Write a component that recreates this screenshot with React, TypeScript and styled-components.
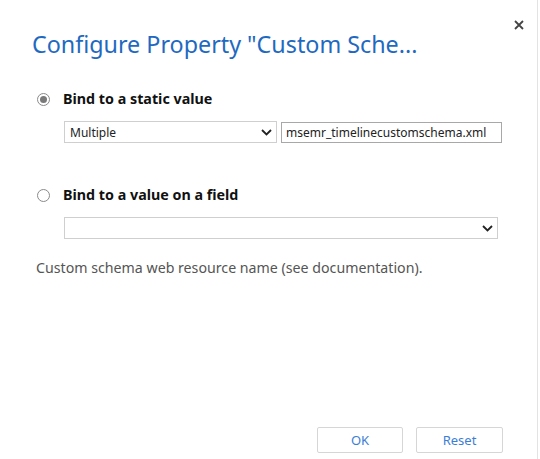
import styled, { createGlobalStyle } from "styled-components";

const GlobalStyle = createGlobalStyle`
  html, body {
    margin: 0;
    padding: 0;
    background: #ffffff;
  }
  body {
    font-family: "Noto Sans", "Open Sans", sans-serif;
  }
`;

const Dialog = styled.div`
  position: relative;
  width: 538px;
  height: 459px;
  border-right: 1px solid #e3e3e3;
  box-sizing: border-box;
  display: flex;
  flex-direction: column;
  padding: 28px 0 0 32px;
`;

const CloseButton = styled.button`
  position: absolute;
  top: 17px;
  right: 10px;
  width: 16px;
  height: 16px;
  padding: 0;
  border: none;
  background: none;
  display: flex;
  align-items: center;
  justify-content: center;
  cursor: pointer;
`;

const Title = styled.h1`
  margin: 0;
  font-size: 23.3px;
  font-weight: 400;
  color: #1f69c1;
  line-height: 32px;
  white-space: nowrap;
`;

const Section = styled.div<{ $top: number }>`
  display: flex;
  flex-direction: column;
  margin-top: ${(p) => p.$top}px;
`;

const OptionRow = styled.label`
  display: flex;
  align-items: center;
  gap: 13px;
  padding-left: 5px;
  font-size: 14.3px;
  font-weight: 700;
  color: #111;
  line-height: 20px;
`;

const Radio = styled.span<{ $checked?: boolean }>`
  width: 11px;
  height: 11px;
  border-radius: 50%;
  border: 1px solid #8a8a8a;
  box-sizing: content-box;
  display: flex;
  align-items: center;
  justify-content: center;
  &::after {
    content: "";
    width: 7px;
    height: 7px;
    border-radius: 50%;
    background: ${(p) => (p.$checked ? "#7a7a7a" : "transparent")};
  }
`;

const FieldRow = styled.div`
  display: flex;
  gap: 4px;
  margin: 12px 0 0 32px;
`;

const SelectBox = styled.div<{ $width: number }>`
  width: ${(p) => p.$width}px;
  height: 22px;
  box-sizing: border-box;
  border: 1px solid #cfcfcf;
  display: flex;
  align-items: center;
  justify-content: space-between;
  padding: 0 4px 0 5px;
  font-size: 12px;
  color: #222;
`;

const TextBox = styled.div`
  width: 221px;
  height: 21px;
  box-sizing: border-box;
  border: 1px solid #a8a8a8;
  display: flex;
  align-items: center;
  padding: 0 4px;
  font-size: 12px;
  color: #222;
  margin-top: 1px;
`;

const Description = styled.p`
  margin: 19px 0 0 4px;
  font-size: 14.2px;
  color: #555555;
  line-height: 20px;
`;

const Footer = styled.div`
  margin-top: auto;
  display: flex;
  justify-content: flex-end;
  gap: 13px;
  padding: 0 34px 6px 0;
`;

const Button = styled.button<{ $width: number }>`
  width: ${(p) => p.$width}px;
  height: 26px;
  background: #ffffff;
  border: 1px solid #d6d6d6;
  border-radius: 2px;
  color: #3b7ed6;
  font-family: inherit;
  font-size: 13px;
  padding: 0;
`;

const Chevron = () => (
  <svg width="11" height="7" viewBox="0 0 11 7">
    <path d="M1 1 L5.5 5.5 L10 1" fill="none" stroke="#222" strokeWidth="1.8" />
  </svg>
);

export default function App() {
  return (
    <>
      <GlobalStyle />
      <Dialog>
        <CloseButton aria-label="Close">
          <svg width="10" height="10" viewBox="0 0 10 10">
            <path d="M1 1 L9 9 M9 1 L1 9" stroke="#444" strokeWidth="1.8" />
          </svg>
        </CloseButton>
        <Title>Configure Property "Custom Sche...</Title>

        <Section $top={29}>
          <OptionRow>
            <Radio $checked />
            Bind to a static value
          </OptionRow>
          <FieldRow>
            <SelectBox $width={213}>
              Multiple
              <Chevron />
            </SelectBox>
            <TextBox>msemr_timelinecustomschema.xml</TextBox>
          </FieldRow>
        </Section>

        <Section $top={42}>
          <OptionRow>
            <Radio />
            Bind to a value on a field
          </OptionRow>
          <FieldRow>
            <SelectBox $width={434}>
              <span />
              <Chevron />
            </SelectBox>
          </FieldRow>
        </Section>

        <Description>Custom schema web resource name (see documentation).</Description>

        <Footer>
          <Button $width={86}>OK</Button>
          <Button $width={87}>Reset</Button>
        </Footer>
      </Dialog>
    </>
  );
}
